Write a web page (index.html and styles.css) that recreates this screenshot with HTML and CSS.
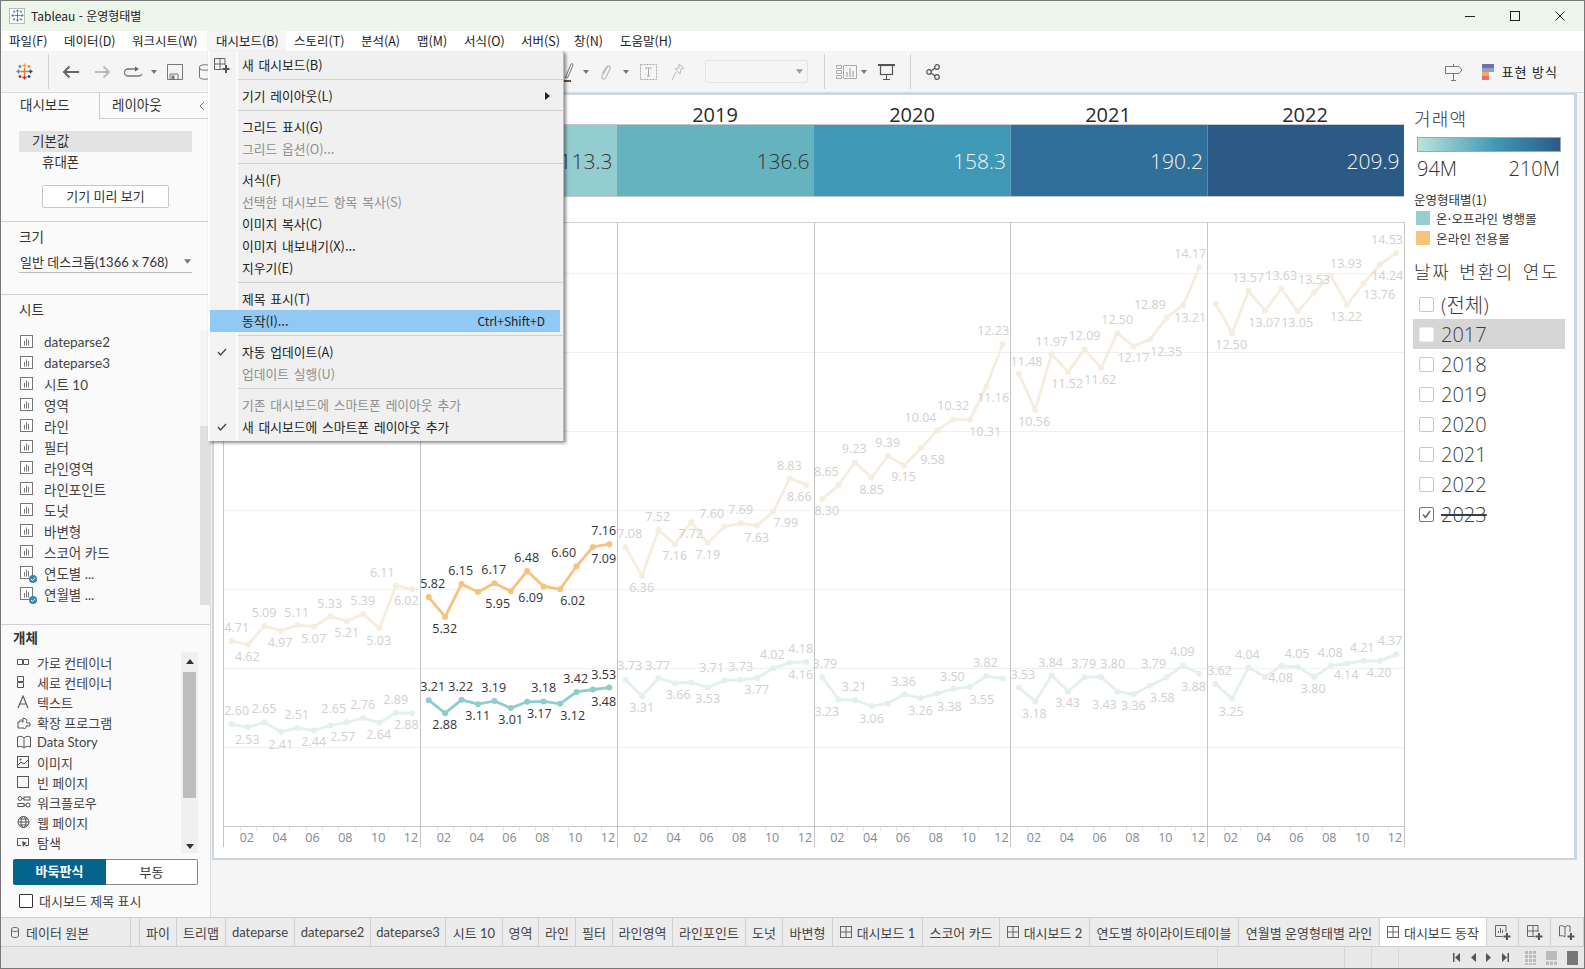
FILE: index.html
```html
<!DOCTYPE html>
<html lang="ko">
<head>
<meta charset="utf-8">
<title>Tableau - 운영형태별</title>
<link rel="stylesheet" href="styles.css">
</head>
<body>
<svg class="defs" width="0" height="0" aria-hidden="true">
  <symbol id="sheet" viewBox="0 0 14 14"><rect x=".5" y=".5" width="12" height="12" fill="#fff" stroke="#777"/><path d="M4.5 6v4.5M6.5 3.5v7M8.5 5v5.5" stroke="#777" fill="none"/></symbol>
  <symbol id="grid" viewBox="0 0 13 13"><rect x=".5" y=".5" width="11" height="11" fill="none" stroke="#666"/><path d="M6 .5v11M.5 6h11" stroke="#666"/></symbol>
  <symbol id="snow" viewBox="0 0 17 17"><g fill="none" stroke-width="1.3">
    <path d="M8.5 5v7M5 8.5h7" stroke="#e8762b"/><path d="M8.5 .5v4M6.5 2.5h4" stroke="#f0a63c"/><path d="M8.5 12.5v4M6.5 14.5h4" stroke="#c72037"/>
    <path d="M.5 8.5h4M2.5 6.5v4" stroke="#5b879b"/><path d="M12.5 8.5h4M14.5 6.5v4" stroke="#1f447a"/>
    <path d="M2.5 3.5h3M4 2v3" stroke="#59879b"/><path d="M11.5 3.5h3M13 2v3" stroke="#eb912b"/><path d="M2.5 13.5h3M4 12v3" stroke="#c72037"/><path d="M11.5 13.5h3M13 12v3" stroke="#1f447a"/></g></symbol>
  <symbol id="snowb" viewBox="0 0 17 17"><g fill="none" stroke="#3a7fb4" stroke-width="1.2">
    <path d="M8.5 5v7M5 8.5h7M8.5 .5v4M6.5 2.5h4M8.5 12.5v4M6.5 14.5h4M.5 8.5h4M2.5 6.5v4M12.5 8.5h4M14.5 6.5v4M2.5 3.5h3M4 2v3M11.5 3.5h3M13 2v3M2.5 13.5h3M4 12v3M11.5 13.5h3M13 12v3"/></g></symbol>
  <symbol id="caret" viewBox="0 0 6 4"><path d="M0 0h6L3 4z" fill="#777"/></symbol>
</svg>

<div class="window">
  <header class="titlebar">
    <span class="appicon"><svg width="13" height="13"><use href="#snowb"/></svg></span>
    <span class="apptitle">Tableau - 운영형태별</span>
    <div class="winctl">
      <svg width="10" height="10" viewBox="0 0 10 10"><path d="M0 5.5h10" stroke="#222"/></svg>
      <svg width="10" height="10" viewBox="0 0 10 10"><rect x=".5" y=".5" width="9" height="9" fill="none" stroke="#222"/></svg>
      <svg width="10" height="10" viewBox="0 0 10 10"><path d="M.5.5l9 9M9.5.5l-9 9" stroke="#222"/></svg>
    </div>
  </header>

  <nav class="menubar">
    <span>파일(F)</span><span>데이터(D)</span><span>워크시트(W)</span><span class="on">대시보드(B)</span><span>스토리(T)</span><span>분석(A)</span><span>맵(M)</span><span>서식(O)</span><span>서버(S)</span><span>창(N)</span><span>도움말(H)</span>
  </nav>

  <div class="toolbar">
    <svg class="t-logo" width="17" height="17"><use href="#snow"/></svg>
    <i class="vsep s1"></i>
    <svg class="t-back" width="17" height="14" viewBox="0 0 17 14"><path d="M17 7H2M7.5 1.5L2 7l5.5 5.5" fill="none" stroke="#666" stroke-width="2"/></svg>
    <svg class="t-fwd" width="16" height="14" viewBox="0 0 16 14"><path d="M0 7h14M8.5 1.5L14 7l-5.500 5.500" fill="none" stroke="#bbb" stroke-width="2"/></svg>
    <svg class="t-redo" width="19" height="12" viewBox="0 0 19 12"><path d="M12 3H4a3.500 3.500 0 0 0 0 7h11a3.500 3.500 0 0 0 3-2" fill="none" stroke="#777" stroke-width="1.300"/><path d="M11 .5L15 3l-4 2.500z" fill="#666"/></svg>
    <svg class="t-c1" width="6" height="4"><use href="#caret"/></svg>
    <svg class="t-save" width="16" height="16" viewBox="0 0 16 16"><path d="M.5.5h15v15H.5z" fill="none" stroke="#777"/><path d="M3 15v-5h8v5" fill="none" stroke="#777"/><rect x="4.500" y="11.500" width="3" height="3.500" fill="#777"/></svg>
    <svg class="t-db" width="12" height="16" viewBox="0 0 12 16"><path d="M.5 3v10c0 3 11 3 11 0V3c0-3-11-3-11 0zM.5 4c0 3 11 3 11 0" fill="none" stroke="#777"/></svg>
    <svg class="t-pen" width="11" height="20" viewBox="0 0 11 20"><path d="M3 14L8 2c2-1 2 .5 2 1L5 15l-2.500 1z" fill="none" stroke="#777"/><path d="M0 19h8" stroke="#555" stroke-width="2"/></svg>
    <svg class="t-c2" width="6" height="4"><use href="#caret"/></svg>
    <svg class="t-clip" width="13" height="18" viewBox="0 0 13 18"><path d="M9 3L3 13c-1 3 2 4 3.500 2L11 6c1-3-2-4-3.500-2L3.500 10" fill="none" stroke="#bbb" stroke-width="1.200"/></svg>
    <svg class="t-c3" width="6" height="4"><use href="#caret"/></svg>
    <svg class="t-text" width="17" height="16" viewBox="0 0 17 16"><rect x=".5" y=".5" width="16" height="15" fill="none" stroke="#aaa" stroke-dasharray="2 1"/><path d="M5 4h7M8.500 4v8M7 12h3" fill="none" stroke="#aaa"/></svg>
    <svg class="t-pin" width="14" height="18" viewBox="0 0 14 18"><path d="M8 1l5 4-3 1-1 5-5-5 4-1zM5 9l-4 8" fill="none" stroke="#bbb"/></svg>
    <span class="combo"><svg width="7" height="5"><use href="#caret"/></svg></span>
    <i class="vsep s2"></i>
    <svg class="t-chart" width="21" height="14" viewBox="0 0 21 14"><path d="M.5.5h5v3h-5zM.5 5.500h5v3h-5zM.5 10.500h5v3h-5zM7.500.5h13v13h-13z" fill="none" stroke="#aaa"/><path d="M11 7v5M14 3v9M17 6v6" stroke="#999"/></svg>
    <svg class="t-c4" width="6" height="4"><use href="#caret"/></svg>
    <svg class="t-pres" width="17" height="16" viewBox="0 0 17 16"><path d="M0 1h17" stroke="#555" stroke-width="2"/><rect x="2.500" y="1.500" width="12" height="9" fill="none" stroke="#555" stroke-width="1.200"/><path d="M8.500 11v4M5 15.500h7" stroke="#555"/></svg>
    <i class="vsep s3"></i>
    <svg class="t-share" width="14" height="16" viewBox="0 0 14 16"><g fill="none" stroke="#555" stroke-width="1.200"><circle cx="11" cy="3" r="2.300"/><circle cx="3" cy="8" r="2.300"/><circle cx="11" cy="13" r="2.300"/><path d="M5 7l4-3M5 9l4 3"/></g></svg>
    <svg class="t-sign" width="19" height="18" viewBox="0 0 19 18"><path d="M1.500 3.500H15L18 7l-3 3.500H1.500zM9.500 1v2.500M9.500 10.500V17M7 17.500h5" fill="none" stroke="#777"/></svg>
    <span class="showme"><i class="b1"></i><i class="b2"></i><i class="b3"></i><i class="b4"></i></span>
    <span class="showtxt">표현 방식</span>
  </div>

  <div class="main">
    <aside class="side">
      <div class="sidetabs"><span class="stab act">대시보드</span><span class="stab">레이아웃</span><span class="collapse"><svg width="6" height="10" viewBox="0 0 6 10"><path d="M5 1L1 5l4 4" fill="none" stroke="#777"/></svg></span></div>
      <section class="sec sec-device">
        <div class="dev dev-sel">기본값</div>
        <div class="dev dev-ph">휴대폰</div>
        <div class="devbtn">기기 미리 보기</div>
      </section>
      <section class="sec sec-size">
        <div class="sechead">크기</div>
        <div class="sizesel"><span>일반 데스크톱(1366 x 768)</span><svg width="7" height="5"><use href="#caret"/></svg></div>
      </section>
      <section class="sec sec-sheets">
        <div class="sechead">시트</div>
        <div class="sheetwrap">
          <ul class="sheets">
            <li><svg width="14" height="14"><use href="#sheet"/></svg>dateparse2</li>
            <li><svg width="14" height="14"><use href="#sheet"/></svg>dateparse3</li>
            <li><svg width="14" height="14"><use href="#sheet"/></svg>시트 10</li>
            <li><svg width="14" height="14"><use href="#sheet"/></svg>영역</li>
            <li><svg width="14" height="14"><use href="#sheet"/></svg>라인</li>
            <li><svg width="14" height="14"><use href="#sheet"/></svg>필터</li>
            <li><svg width="14" height="14"><use href="#sheet"/></svg>라인영역</li>
            <li><svg width="14" height="14"><use href="#sheet"/></svg>라인포인트</li>
            <li><svg width="14" height="14"><use href="#sheet"/></svg>도넛</li>
            <li><svg width="14" height="14"><use href="#sheet"/></svg>바변형</li>
            <li><svg width="14" height="14"><use href="#sheet"/></svg>스코어 카드</li>
            <li><span class="badged"><svg width="14" height="14"><use href="#sheet"/></svg><svg class="badge" width="8" height="8" viewBox="0 0 8 8"><circle cx="4" cy="4" r="4" fill="#3a87ad"/><path d="M2 4l1.500 1.500L6 2.800" fill="none" stroke="#fff"/></svg></span>연도별 ...</li>
            <li><span class="badged"><svg width="14" height="14"><use href="#sheet"/></svg><svg class="badge" width="8" height="8" viewBox="0 0 8 8"><circle cx="4" cy="4" r="4" fill="#3a87ad"/><path d="M2 4l1.500 1.500L6 2.800" fill="none" stroke="#fff"/></svg></span>연월별 ...</li>
          </ul>
          <div class="strack"><div class="sthumb"></div></div>
        </div>
      </section>
      <section class="sec-obj">
        <div class="objhead">개체</div>
        <div class="objwrap">
          <ul class="objs">
            <li><svg width="14" height="14" viewBox="0 0 14 14"><path d="M.5 4.500h5v5h-5zM6.500 4.500h5v5h-5z" fill="none" stroke="#555"/></svg>가로 컨테이너</li>
            <li><svg width="14" height="14" viewBox="0 0 14 14"><path d="M.5 1.500h6v5h-6zM.5 7.500h6v5h-6z" fill="none" stroke="#555"/></svg>세로 컨테이너</li>
            <li><svg width="14" height="14" viewBox="0 0 14 14"><path d="M1 13L6 1l5 12M3 9h6" fill="none" stroke="#555" stroke-width="1.100"/></svg>텍스트</li>
            <li><svg width="14" height="14" viewBox="0 0 14 14"><path d="M1 13V7h2c-1-3 3-3 2 0h1V3l3 1c2 2-1 3 1 4h3v3H9c1 3-3 3-2 2z" fill="none" stroke="#555"/></svg>확장 프로그램</li>
            <li><svg width="14" height="14" viewBox="0 0 14 14"><path d="M7 3C5 1 3 1 .5 2v10c2.500-1 4.500-1 6.500 1 2-2 4-2 6.500-1V2C11 1 9 1 7 3zM7 3v10" fill="none" stroke="#555"/></svg>Data Story</li>
            <li><svg width="14" height="14" viewBox="0 0 14 14"><rect x=".5" y="1.500" width="11" height="11" fill="none" stroke="#555"/><path d="M1 10l3-3 3 2 4-4" fill="none" stroke="#555"/><circle cx="3.500" cy="4.500" r="1" fill="#555"/></svg>이미지</li>
            <li><svg width="14" height="14" viewBox="0 0 14 14"><rect x=".5" y="1.500" width="11" height="11" fill="none" stroke="#555"/></svg>빈 페이지</li>
            <li><svg width="14" height="14" viewBox="0 0 14 14"><g fill="none" stroke="#555"><circle cx="3" cy="3.500" r="2"/><rect x="7" y="2" width="6" height="3"/><circle cx="11" cy="10" r="2"/><rect x="1" y="8.500" width="6" height="3"/><path d="M5 3.500h2M7 10h2"/></g></svg>워크플로우</li>
            <li><svg width="14" height="14" viewBox="0 0 14 14"><g fill="none" stroke="#555"><circle cx="6.500" cy="7" r="5.500"/><ellipse cx="6.500" cy="7" rx="2.500" ry="5.500"/><path d="M1 7h11M2 4h9M2 10h9"/></g></svg>웹 페이지</li>
            <li><svg width="14" height="14" viewBox="0 0 14 14"><path d="M4 10.500H.5v-7h11v7H9" fill="none" stroke="#555"/><path d="M5 6l1 6 1.500-2 2.500 2-2-3 2-1z" fill="#555"/></svg>탐색</li>
          </ul>
          <div class="otrack"><i class="arr up"></i><div class="othumb"></div><i class="arr dn"></i></div>
        </div>
        <div class="segment"><span class="seg-on">바둑판식</span><span class="seg-off">부동</span></div>
        <label class="titlechk"><i class="box"></i>대시보드 제목 표시</label>
      </section>
    </aside>

    <div class="dash">
      <div class="panel">
        <svg id="chart" class="chart" width="1191" height="763" viewBox="214 95 1191 763"></svg>
        <div class="legend">
          <div class="lg-title lg-t1">거래액</div>
          <div class="ramp"></div>
          <div class="range"><span>94M</span><span>210M</span></div>
          <div class="lg-sub">운영형태별(1)</div>
          <div class="lg-row"><i class="sw teal"></i>온·오프라인 병행몰</div>
          <div class="lg-row"><i class="sw org"></i>온라인 전용몰</div>
          <div class="lg-title lg-t2">날짜 변환의 연도</div>
          <div class="flt"><i class="cb"></i>(전체)</div>
          <div class="flt sel"><i class="cb"></i>2017</div>
          <div class="flt"><i class="cb"></i>2018</div>
          <div class="flt"><i class="cb"></i>2019</div>
          <div class="flt"><i class="cb"></i>2020</div>
          <div class="flt"><i class="cb"></i>2021</div>
          <div class="flt"><i class="cb"></i>2022</div>
          <div class="flt chk"><i class="cb"><svg width="13" height="13" viewBox="0 0 13 13"><path d="M3 6.500l2.500 3L10 3" fill="none" stroke="#666" stroke-width="1.600"/></svg></i><s>2023</s></div>
        </div>
      </div>
    </div>
  </div>

  <div class="tabs">
    <span class="tab src"><svg width="8" height="11" viewBox="0 0 8 11"><path d="M.5 2v7c0 2 7 2 7 0V2c0-2-7-2-7 0zM.5 3c0 2 7 2 7 0" fill="none" stroke="#666"/></svg>데이터 원본</span>
    <span class="tab"></span>
    <span class="tab">파이</span><span class="tab">트리맵</span><span class="tab">dateparse</span><span class="tab">dateparse2</span><span class="tab">dateparse3</span><span class="tab">시트 10</span><span class="tab">영역</span><span class="tab">라인</span><span class="tab">필터</span><span class="tab">라인영역</span><span class="tab">라인포인트</span><span class="tab">도넛</span><span class="tab">바변형</span>
    <span class="tab"><svg width="13" height="13"><use href="#grid"/></svg>대시보드 1</span>
    <span class="tab">스코어 카드</span>
    <span class="tab"><svg width="13" height="13"><use href="#grid"/></svg>대시보드 2</span>
    <span class="tab">연도별 하이라이트테이블</span>
    <span class="tab">연월별 운영형태별 라인</span>
    <span class="tab cur"><svg width="13" height="13"><use href="#grid"/></svg>대시보드 동작</span>
    <span class="tab"><svg width="16" height="16" viewBox="0 0 16 16"><path d="M11 8V1.500H.5v11H8M3.500 9V7M5.500 9V4M7.500 9V6" fill="none" stroke="#666"/><path d="M12 9v7M8.500 12.500h7" stroke="#555" stroke-width="2"/></svg></span>
    <span class="tab"><svg width="16" height="16" viewBox="0 0 16 16"><path d="M11 8V1.500H.5v11H8M6 1.500v11M.5 7h10.500" fill="none" stroke="#666"/><path d="M12 9v7M8.500 12.500h7" stroke="#555" stroke-width="2"/></svg></span>
    <span class="tab"><svg width="16" height="16" viewBox="0 0 16 16"><path d="M6 3C4 1.500 2 1.500.5 2v10c2-.5 3.500-.5 5.500 1M6 3v10M6 3c1.500-1.500 3-1.500 5-1v6" fill="none" stroke="#666"/><path d="M12 9v7M8.500 12.500h7" stroke="#555" stroke-width="2"/></svg></span>
  </div>

  <footer class="status">
    <i class="st st1"></i><i class="st st2"></i><i class="st st3"></i><i class="st st4"></i>
    <span class="nav">
      <svg width="7" height="9" viewBox="0 0 7 9"><path d="M0 0h1.500v9H0zM7 0v9L2 4.500z" fill="#555"/></svg>
      <svg width="5" height="9" viewBox="0 0 5 9"><path d="M5 0v9L0 4.500z" fill="#555"/></svg>
      <svg width="5" height="9" viewBox="0 0 5 9"><path d="M0 0v9l5-4.500z" fill="#555"/></svg>
      <svg width="7" height="9" viewBox="0 0 7 9"><path d="M0 0v9l5-4.500zM5.500 0H7v9H5.500z" fill="#555"/></svg>
    </span>
    <span class="views">
      <svg width="11" height="14" viewBox="0 0 11 14"><path d="M0 0h3v3H0zM4 0h3v3H4zM8 0h3v3H8zM0 4h3v3H0zM4 4h3v3H4zM8 4h3v3H8zM0 8h3v3H0zM4 8h3v3H4zM8 8h3v3H8zM0 12h3v2H0zM4 12h3v2H4zM8 12h3v2H8z" fill="#bbb"/></svg>
      <svg width="11" height="14" viewBox="0 0 11 14"><path d="M0 0h11v9H0zM0 10.500h3V14H0zM4 10.500h3V14H4zM8 10.500h3V14H8z" fill="#bbb"/></svg>
      <svg width="11" height="14" viewBox="0 0 11 14"><path d="M0 0h11v14H0z" fill="#777"/></svg>
    </span>
  </footer>

  <div class="menu">
    <div class="mi"><span class="mg"><svg width="16" height="16" viewBox="0 0 16 16"><path d="M11 8V1.500H.5v11H8M6 1.500v11M.5 7h10.500" fill="none" stroke="#666"/><path d="M12 8v8M8.500 12h7" stroke="#555" stroke-width="2"/></svg></span>새 대시보드(B)</div>
    <div class="ms"></div>
    <div class="mi"><span class="mg"></span>기기 레이아웃(L)<i class="marrow"></i></div>
    <div class="ms"></div>
    <div class="mi"><span class="mg"></span>그리드 표시(G)</div>
    <div class="mi off"><span class="mg"></span>그리드 옵션(O)...</div>
    <div class="ms"></div>
    <div class="mi"><span class="mg"></span>서식(F)</div>
    <div class="mi off"><span class="mg"></span>선택한 대시보드 항목 복사(S)</div>
    <div class="mi"><span class="mg"></span>이미지 복사(C)</div>
    <div class="mi"><span class="mg"></span>이미지 내보내기(X)...</div>
    <div class="mi"><span class="mg"></span>지우기(E)</div>
    <div class="ms"></div>
    <div class="mi"><span class="mg"></span>제목 표시(T)</div>
    <div class="mi hi"><span class="mg"></span>동작(I)...<span class="short">Ctrl+Shift+D</span></div>
    <div class="ms"></div>
    <div class="mi"><span class="mg"><svg width="10" height="8" viewBox="0 0 10 8"><path d="M1 4l2.500 3L9 1" fill="none" stroke="#444" stroke-width="1.300"/></svg></span>자동 업데이트(A)</div>
    <div class="mi off"><span class="mg"></span>업데이트 실행(U)</div>
    <div class="ms"></div>
    <div class="mi off"><span class="mg"></span>기존 대시보드에 스마트폰 레이아웃 추가</div>
    <div class="mi"><span class="mg"><svg width="10" height="8" viewBox="0 0 10 8"><path d="M1 4l2.500 3L9 1" fill="none" stroke="#444" stroke-width="1.300"/></svg></span>새 대시보드에 스마트폰 레이아웃 추가</div>
  </div>
</div>
<script src="chart.js"></script>
</body>
</html>
```
FILE: styles.css
```css
* { box-sizing: border-box; }
html, body { margin: 0; padding: 0; }
body { width: 1585px; height: 969px; overflow: hidden; font-family: "Noto Sans CJK KR", "Noto Sans", sans-serif; font-size: 12px; color: #333; background: #f5f5f5; }
.defs { position: absolute; }
ul { list-style: none; margin: 0; padding: 0; }
i { font-style: normal; }
svg { display: block; flex: none; }

.window { position: relative; width: 1585px; height: 969px; border: 1px solid #787878; display: flex; flex-direction: column; }

.titlebar { height: 30px; background: #ecf6ea; display: flex; align-items: center; padding-left: 8px; padding-bottom: 1px; }
.appicon { width: 16px; height: 16px; background: #fff; border: 1px solid #bbb; display: flex; align-items: center; justify-content: center; }
.apptitle { margin-left: 6px; color: #222; }
.winctl { margin-left: auto; display: flex; gap: 35px; padding-right: 19px; }

.menubar { height: 20px; background: #fff; display: grid; grid-template-columns: 55px 68px 84px 78px 67px 56px 47px 57px 53px 46px auto; padding: 0 0 0 8px; line-height: 20px; font-size: 12.5px; color: #222; justify-content: start; }
.menubar .on { margin: 0 8px 0 -9px; padding: 0 0 0 9px; background: #f5f5f5; white-space: nowrap; }

.toolbar { height: 42px; background: #f5f5f5; border-bottom: 1px solid #d6dbe0; display: flex; align-items: center; }
.vsep { width: 1px; height: 35px; background: #d2d2d2; }
.t-logo { margin-left: 15px; }
.s1 { margin-left: 15px; }
.t-back { margin-left: 13px; }
.t-fwd { margin-left: 16px; }
.t-redo { margin-left: 13px; }
.t-c1 { margin-left: 8px; }
.t-save { margin-left: 10px; }
.t-db { margin-left: 16px; }
.t-pen { margin-left: 352px; }
.t-c2 { margin-left: 9px; }
.t-clip { margin-left: 10px; }
.t-c3 { margin-left: 11px; }
.t-text { margin-left: 11px; }
.t-pin { margin-left: 14px; }
.combo { margin-left: 20px; width: 103px; height: 23px; border: 1px solid #dcdcdc; border-radius: 2px; display: flex; align-items: center; justify-content: flex-end; padding-right: 4px; opacity: .7; }
.s2 { margin-left: 16px; }
.t-chart { margin-left: 11px; }
.t-c4 { margin-left: 4px; }
.t-pres { margin-left: 11px; }
.s3 { margin-left: 15px; }
.t-share { margin-left: 15px; }
.t-sign { margin-left: auto; }
.showme { margin-left: 19px; width: 12px; display: flex; flex-direction: column; gap: 0; }
.showme i { display: block; height: 4px; }
.showme .b1 { background: #6f70a9; }
.showme .b2 { background: #8ea2c6; }
.showme .b3 { background: #f5a95f; width: 7px; }
.showme .b4 { background: #ee6a6a; width: 7px; }
.showtxt { margin-left: 8px; padding-right: 26px; color: #222; font-size: 13px; letter-spacing: 1px; }

.main { flex: 1; min-height: 0; display: flex; }
.side { width: 210px; background: #fafafa; border-right: 1px solid #dcdcdc; display: flex; flex-direction: column; font-family: Lato, "Noto Sans CJK KR", sans-serif; font-size: 13px; }
.sidetabs { height: 26px; display: flex; line-height: 25px; font-size: 13.5px; }
.stab { padding-left: 19px; width: 99px; border-right: 1px solid #ccc; }
.stab:not(.act) { width: 99px; padding-left: 12px; border-right: 0; border-bottom: 1px solid #ccc; }
.collapse { flex: 1; border-bottom: 1px solid #ccc; display: flex; align-items: center; }
.sec { border-bottom: 1px solid #d2d2d2; }
.sec-device { padding: 12px 0 13px; height: 103px; }
.dev { height: 21px; line-height: 20px; font-size: 13.5px; }
.dev-sel { margin-left: 18px; width: 173px; padding-left: 13px; background: #e3e3e3; }
.dev-ph { padding-left: 41px; }
.devbtn { margin: 12px 0 0 41px; width: 127px; height: 23px; border: 1px solid #c8c8c8; border-radius: 2px; background: #fff; text-align: center; line-height: 21px; }
.sec-size { height: 73px; padding-top: 6px; }
.sechead { height: 18px; line-height: 18px; padding-left: 18px; font-size: 13.5px; }
.sizesel { margin: 6px 0 0 18px; width: 173px; height: 21px; border-bottom: 1px solid #bbb; display: flex; align-items: center; justify-content: space-between; padding: 0 1px 2px 1px; }
.sec-sheets { height: 330px; padding-top: 6px; }
.sheetwrap { margin-top: 12px; display: flex; }
.sheets { width: 199px; }
.sheets li { height: 21px; display: flex; align-items: center; padding-left: 19px; gap: 10px; font-size: 13.5px; color: #444; }
.badged { position: relative; display: block; }
.badge { position: absolute; left: 9px; top: 9px; }
.strack { width: 10px; height: 274px; background: #f4f4f4; }
.sthumb { margin-top: 95px; height: 179px; background: #e0e0e0; }

.sec-obj { flex: 1; }
.objhead { margin: 4px 0 0 12px; height: 18px; line-height: 18px; font-weight: 700; font-size: 13.5px; }
.objwrap { margin-top: 5px; display: flex; height: 201px; }
.objs { width: 180px; }
.objs li { height: 20px; display: flex; align-items: center; padding-left: 16px; gap: 6px; color: #444; }
.otrack { width: 17px; background: #f0f0f0; display: flex; flex-direction: column; align-items: center; }
.othumb { margin-top: 8px; width: 13px; height: 126px; background: #bdbdbd; }
.arr { width: 0; height: 0; border-left: 4px solid transparent; border-right: 4px solid transparent; }
.arr.up { margin-top: 7px; border-bottom: 5px solid #333; }
.arr.dn { margin-top: 46px; border-top: 5px solid #333; }
.segment { margin: 6px 0 0 12px; width: 185px; height: 26px; display: flex; line-height: 25px; text-align: center; }
.seg-on { width: 93px; background: #05648e; color: #fff; font-weight: 700; border-radius: 2px 0 0 2px; }
.seg-off { flex: 1; background: #fff; border: 1px solid #888; border-left: 0; border-radius: 0 2px 2px 0; }
.titlechk { margin: 8px 0 0 18px; display: flex; align-items: center; gap: 6px; height: 14px; color: #444; }
.box { width: 14px; height: 14px; border: 1px solid #333; border-radius: 1px; background: #fff; margin-bottom: -2px; }

.dash { flex: 1; padding-left: 1px; }
.panel { width: 1365px; height: 767px; background: #fff; border: 2px solid #ccd6df; border-right-width: 3px; display: flex; }
.chart { width: 1191px; height: 763px; }
.chart text { font-family: "Open Sans", "Noto Sans", sans-serif; }
.lab { font-size: 12.5px; text-anchor: middle; fill: #333; }
.lab.f { fill: #d0d0d0; }
.tick { font-size: 12.5px; text-anchor: middle; fill: #808a92; }
.yr { font-size: 20px; font-weight: 500; text-anchor: middle; fill: #2b2b2b; }
.val { font-size: 21px; font-weight: 300; text-anchor: end; }
.val.d { fill: #333; }
.val.w { fill: #f2f6f8; }

.legend { flex: 1; padding: 11px 0 0 9px; color: #333; }
.lg-title { font-size: 18px; line-height: 24px; letter-spacing: 1.2px; font-weight: 300; }
.ramp { margin: 7px 0 0 3px; width: 144px; height: 15px; border: 1px solid #a6a6a0; background: linear-gradient(to right, #bde3da, #3f98b5 55%, #2c5a87); }
.range { margin: 6px 0 0 3px; width: 143px; display: flex; justify-content: space-between; font-family: "Open Sans", sans-serif; font-size: 20px; font-weight: 300; line-height: 22px; }
.lg-sub { margin-top: 12px; line-height: 16px; font-size: 12.5px; }
.lg-row { height: 20px; margin-left: 2px; display: flex; align-items: center; gap: 6px; font-size: 12.5px; letter-spacing: .2px; }
.lg-row:first-of-type { margin-top: 1px; }
.sw { width: 14px; height: 14px; }
.sw.teal { background: #97cfd0; }
.sw.org { background: #f7c37d; }
.lg-t2 { margin-top: 11px; margin-bottom: 6px; letter-spacing: 1.7px; word-spacing: 2px; }
.flt { height: 30px; margin-left: -1px; width: 152px; display: flex; align-items: center; gap: 7px; padding-left: 6px; font-family: "Open Sans", "Noto Sans CJK KR", sans-serif; font-size: 20px; font-weight: 300; color: #3c3c3c; }
.flt.sel { background: #d6d6d6; }
.cb { width: 15px; height: 15px; background: #fff; border: 1px solid #c8c8c8; border-radius: 2px; }
.flt.sel .cb { border-color: #eee; }
.flt.chk .cb { border-color: #777; }
.flt s { text-decoration: line-through; }

.tabs { height: 30px; display: grid; grid-template-columns: 130px 9px 37px 49px 69px 76px 75px 57px 36px 37px 37px 60px 73px 37px 50px 90px 77px 90px 149px 141px 107px 32px 32px 33px; background: #ececec; border-top: 1px solid #cfcfcf; border-bottom: 1px solid #cfcfcf; font-family: Lato, "Noto Sans CJK KR", sans-serif; font-size: 13px; }
.tab { display: flex; align-items: center; justify-content: center; gap: 4px; border-right: 1px solid #d0d0d0; color: #444; white-space: nowrap; overflow: hidden; }
.tab.src { justify-content: flex-start; padding-left: 10px; gap: 7px; }
.tab.cur { background: #fff; }
.status { height: 21px; background: #e8e8e8; position: relative; display: flex; align-items: center; }
.st { width: 1px; height: 21px; background: #d6d6d6; margin-right: 126px; }
.st1 { margin-left: 1216px; }
.st2 { margin-right: 26px; }
.st3 { margin-right: 26px; }
.st4 { margin-right: 0; }
.nav { margin-left: 54px; display: flex; gap: 10.5px; }
.views { margin-left: 16.5px; display: flex; gap: 10px; }

.menu { position: absolute; left: 207px; top: 50px; width: 356px; height: 390px; padding-top: 3px; color: #222; font-size: 12.75px; word-spacing: 1.3px;
  background: linear-gradient(to right, #fff 0 2px, #f3f3f3 2px 28px, #fbfbfb 28px 30px, #f0f0f0 30px);
  border-right: 1px solid #bbb; box-shadow: 2px 2px 3px rgba(0,0,0,.45); }
.mi { height: 22px; margin: 0 3px 0 2px; display: flex; align-items: center; line-height: 22px; white-space: nowrap; }
.mg { width: 32px; display: flex; justify-content: center; padding-right: 9px; }
.mi.off { color: #8e8e8e; }
.mi.hi { background: #90c8f6; }
.short { margin-left: auto; padding-right: 15px; font-size: 12px; }
.marrow { margin-left: auto; margin-right: 10px; width: 0; height: 0; border-left: 5px solid #222; border-top: 4px solid transparent; border-bottom: 4px solid transparent; }
.ms { height: 1px; margin: 3px 0 5px 30px; background: #d0d0d0; }
```
FILE: chart.js
```javascript
// Monthly transaction amounts by year and store type, with label spots read off the source view.
var Z = {
  a: function (x, y) { return [220 + x / 3, 560 + y / 3]; },
  b: function (x, y) { return [420 + x / 3, 500 + y / 3]; },
  c: function (x, y) { return [820 + x / 2.658, 230 + y / 3]; },
  d: function (x, y) { return [820 + x / 2.658, 600 + y / 3]; }
};
var YEARS = [
  { x: 231.7, active: false, org: [4.71,4.62,5.09,4.97,5.11,5.07,5.33,5.21,5.39,5.03,6.11,6.02], teal: [2.60,2.53,2.65,2.41,2.51,2.44,2.57,2.65,2.76,2.64,2.89,2.88],
    labO: ['a','4.71 50 203,4.62 82 290,5.09 132 158,4.97 180 248,5.11 230 156,5.07 281 235,5.33 329 130,5.21 380 218,5.39 428 122,5.03 476 240,6.11 487 37,6.02 559 122'],
    labT: ['a','2.60 50 452,2.53 82 537,2.65 132 446,2.41 182 552,2.51 230 464,2.44 281 545,2.65 341 446,2.57 368 530,2.76 428 434,2.64 476 524,2.89 527 418,2.88 559 494'] },
  { x: 428.7, active: true, org: [5.82,5.32,6.15,5.95,6.17,5.97,6.48,6.09,6.02,6.60,7.09,7.16], teal: [3.21,2.88,3.22,3.11,3.19,3.01,3.17,3.18,3.12,3.42,3.48,3.53],
    labO: ['b','5.82 38 250,5.32 74 386,6.15 122 211,5.95 233 311,6.17 221 209,6.48 320 173,6.09 332 293,6.02 458 301,6.60 431 157,7.09 551 176,7.16 551 92'],
    labT: ['b','3.21 38 560,2.88 74 674,3.22 122 560,3.11 173 646,3.19 221 562,3.01 272 658,3.17 358 640,3.18 371 563,3.12 458 646,3.42 467 536,3.48 551 605,3.53 551 524'] },
  { x: 625.6, active: false, org: [7.08,6.36,7.52,7.16,7.72,7.19,7.60,7.69,7.63,7.99,8.83,8.66], teal: [3.73,3.31,3.77,3.64,3.66,3.53,3.71,3.73,3.77,4.02,4.16,4.18],
    labO: ['b','7.08 629 101,6.36 665 263,7.52 713 50,7.16 764 167,7.72 812 100,7.19 863 163,7.60 875 41,7.69 962 29,7.63 1010 113,7.99 1097 68,8.83 1108 -105,8.66 1138 -11'],
    labT: ['b','3.73 629 497,3.31 665 623,3.77 713 495,3.66 775 584,3.53 863 596,3.71 875 503,3.73 962 500,3.77 1010 569,4.02 1057 464,4.18 1142 446,4.16 1142 524'] },
  { x: 822.2, active: false, org: [8.30,8.65,9.23,8.85,9.39,9.15,9.58,10.04,10.32,10.31,11.16,12.23], teal: [3.79,3.23,3.21,3.06,3.13,3.36,3.26,3.38,3.50,3.55,3.82,3.76],
    labO: ['c','8.30 18 842,8.65 17 725,9.23 91 656,8.85 137 777,9.39 180 638,9.15 222 740,9.58 299 689,10.04 267 561,10.32 354 526,10.31 439 604,11.16 460 503,12.23 460 302'],
    labT: ['d','3.79 13 190,3.23 18 333,3.21 91 260,3.06 137 354,3.36 222 243,3.26 267 330,3.38 344 318,3.50 352 228,3.55 430 297,3.82 440 188'] },
  { x: 1018.8, active: false, org: [11.48,10.56,11.97,11.52,12.09,11.62,12.50,12.17,12.35,12.89,13.21,14.17], teal: [3.53,3.18,3.84,3.43,3.79,3.80,3.43,3.36,3.58,3.79,4.09,3.88],
    labO: ['c','11.48 549 393,10.56 569 575,11.97 615 333,11.52 657 460,12.09 703 317,11.62 745 449,12.50 790 269,12.17 833 383,12.35 920 363,12.89 877 224,13.21 984 261,14.17 984 71'],
    labT: ['d','3.53 539 224,3.18 570 339,3.84 613 186,3.43 658 308,3.79 701 190,3.43 756 312,3.80 778 190,3.36 833 317,3.79 887 190,3.58 910 293,4.09 963 155,3.88 993 258'] },
  { x: 1215.7, active: false, org: [13.24,12.50,13.57,13.07,13.63,13.05,13.53,13.97,13.22,13.76,14.24,14.53], teal: [3.62,3.25,4.04,3.80,4.08,4.05,3.80,4.08,4.14,4.21,4.20,4.37],
    labO: ['c','12.50 1093 344,13.57 1138 143,13.07 1181 278,13.63 1226 137,13.05 1268 278,13.53 1313 147,13.22 1398 260,13.93 1398 100,13.76 1486 193,14.24 1508 137,14.53 1507 29'],
    labT: ['d','3.62 1062 212,3.25 1093 333,4.04 1136 163,4.08 1224 232,4.05 1268 160,3.80 1311 266,4.08 1356 158,4.14 1398 224,4.21 1441 143,4.20 1486 218,4.37 1515 122'] }
];
var HEAT = [
  { x0: 224, x1: 420.5, c: '#a6d6d2' },
  { x0: 420.5, x1: 617, c: '#93cdcf', t: '113.3', cls: 'd' },
  { x0: 617, x1: 814, c: '#66b3c0', t: '136.6', cls: 'd', y: '2019', yc: 715 },
  { x0: 814, x1: 1010.5, c: '#3f98b5', t: '158.3', cls: 'w', y: '2020', yc: 912 },
  { x0: 1010.5, x1: 1207.5, c: '#306f99', t: '190.2', cls: 'w', y: '2021', yc: 1108 },
  { x0: 1207.5, x1: 1404, c: '#2c5a87', t: '209.9', cls: 'w', y: '2022', yc: 1305 }
];
var DIV = [223.5, 420.5, 617.5, 814.5, 1010.5, 1207.5, 1404.5];
var STEP = 16.42, AX = 827, K = 39.5;

function py(v) { return AX - K * v; }
function line(x1, y1, x2, y2, c) { return '<line x1="' + x1 + '" y1="' + y1 + '" x2="' + x2 + '" y2="' + y2 + '" stroke="' + c + '"/>'; }
function series(x0, vals, color) {
  var pts = vals.map(function (v, i) { return (x0 + i * STEP).toFixed(1) + ',' + py(v).toFixed(1); });
  var s = '<polyline points="' + pts.join(' ') + '" fill="none" stroke="' + color + '" stroke-width="2.8" stroke-linejoin="round"/>';
  pts.forEach(function (p) { var a = p.split(','); s += '<circle cx="' + a[0] + '" cy="' + a[1] + '" r="3" fill="' + color + '"/>'; });
  return s;
}
function labels(spec, faded) {
  return spec[1].split(',').map(function (e) {
    var a = e.split(' '), p = Z[spec[0]](+a[1], +a[2]);
    return '<text class="lab' + (faded ? ' f' : '') + '" x="' + p[0].toFixed(1) + '" y="' + (p[1] + 4.5).toFixed(1) + '">' + a[0] + '</text>';
  }).join('');
}

var out = '';
HEAT.forEach(function (h) {
  out += '<rect x="' + h.x0 + '" y="125" width="' + (h.x1 - h.x0) + '" height="71" fill="' + h.c + '"/>';
  if (h.t) out += '<text class="val ' + h.cls + '" x="' + (h.x1 - 4.5) + '" y="168.500">' + h.t + '</text>';
  if (h.y) out += '<text class="yr" x="' + h.yc + '" y="122">' + h.y + '</text>';
});
out += line(224, 196.5, 1404, 196.5, '#c8c8c8') + line(224, 124.5, 1404, 124.5, '#c8c8c8');
[273.5, 352.5, 431.5, 510.5, 589.5, 668.5, 747.5].forEach(function (y) { out += line(224, y, 1404, y, '#f0f0f0'); });
out += line(224, 222.5, 1404, 222.5, '#d0d0d0') + line(224, 826.5, 1404, 826.5, '#c8c8c8');
DIV.forEach(function (x) { out += line(x, 222, x, 847, '#c4c4c4'); });
YEARS.forEach(function (y) {
  var start = y.x - 8.2;
  for (var m = 1; m < 12; m++) {
    var tx = Math.round(start + m * STEP) + 0.5;
    out += line(tx, 827, tx, 831, '#e6e6e6');
  }
  for (var i = 1; i < 12; i += 2) {
    out += '<text class="tick" x="' + (y.x + i * STEP - 1.3).toFixed(1) + '" y="841.500">' + ('0' + (i + 1)).slice(-2) + '</text>';
  }
});
YEARS.forEach(function (y) {
  out += series(y.x, y.org, y.active ? '#f7c27b' : '#f6ecdf');
  out += series(y.x, y.teal, y.active ? '#8fcdcc' : '#e3f0ee');
  out += labels(y.labO, !y.active) + labels(y.labT, !y.active);
});
document.getElementById('chart').innerHTML = out;
```
